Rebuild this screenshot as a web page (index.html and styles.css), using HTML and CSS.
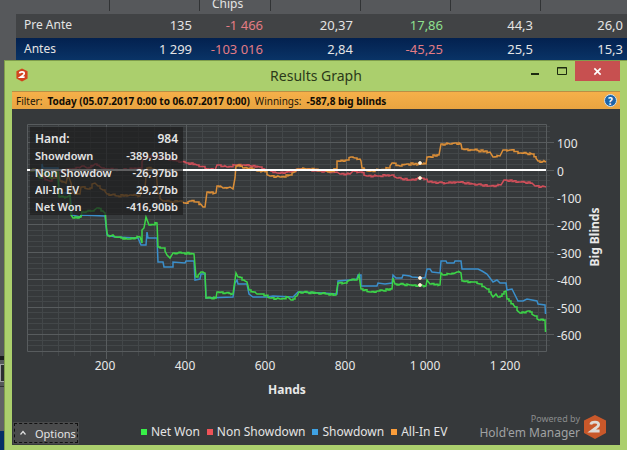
FILE: index.html
```html
<!DOCTYPE html>
<html lang="en">
<head>
    <meta charset="UTF-8">
    <meta name="viewport" content="width=device-width, initial-scale=1.0">
    <title>Results Graph</title>
    <link rel="stylesheet" href="styles.css">
</head>
<body>

    <main class="report">
        <table class="stats">
            <colgroup>
                <col class="col-name">
                <col class="col-wide">
                <col class="col-chips">
                <col class="col-wide">
                <col class="col-wide">
                <col class="col-wide">
                <col class="col-wide">
            </colgroup>
            <thead>
                <tr><th></th><th></th><th>Chips</th><th></th><th></th><th></th><th></th></tr>
            </thead>
            <tbody>
                <tr><td>Pre Ante</td><td>135</td><td class="loss">-1 466</td><td>20,37</td><td class="gain">17,86</td><td>44,3</td><td>26,0</td></tr>
                <tr class="selected"><td>Antes</td><td>1 299</td><td class="loss">-103 016</td><td>2,84</td><td class="loss">-45,25</td><td>25,5</td><td>15,3</td></tr>
            </tbody>
        </table>
        <div class="lower">
            <div class="lower-bar"></div>
            <div class="lower-field"></div>
            <div class="lower-gap"></div>
            <div class="lower-row"></div>
        </div>
    </main>

    <section class="window">
        <header class="titlebar">
            <svg class="app-icon" viewBox="0 0 14 16">
                <path d="M7 0.5 L13.5 3.5 V12 L7 15.5 L0.5 12 V3.5 Z" fill="#d2431d"/>
                <path d="M4.2 6 Q4.4 4.4 7 4.4 Q9.6 4.4 9.6 6.3 Q9.6 7.6 7.6 8.7 L5 10.6 H10" fill="none" stroke="#fff" stroke-width="2"/>
            </svg>
            <h1>Results Graph</h1>
            <div class="controls">
                <button type="button" class="minimize" aria-label="Minimize"><svg viewBox="0 0 10 10"><path d="M1 8 H9" stroke="#1c2a10" stroke-width="2"/></svg></button>
                <button type="button" class="maximize" aria-label="Maximize"><svg viewBox="0 0 10 10"><path d="M0.5 1.5 H9.5 V8.5 H0.5 Z M0 2 H10" fill="none" stroke="#1c2a10" stroke-width="1"/></svg></button>
                <button type="button" class="close" aria-label="Close"><svg viewBox="0 0 10 10"><path d="M1.5 1.5 L8.5 8.5 M8.5 1.5 L1.5 8.5" stroke="#fff" stroke-width="1.8"/></svg></button>
            </div>
        </header>

        <div class="client">
            <div class="filter">
                <span>Filter:</span>
                <strong>Today (05.07.2017 0:00 to 06.07.2017 0:00)</strong>
                <span>Winnings:</span>
                <strong>-587,8 big blinds</strong>
                <button type="button" class="help" aria-label="Help">?</button>
            </div>

            <div class="chart">
                <svg class="plot" viewBox="12 109 608 291">
                    <g id="grid"></g>
                    <g id="series"></g>
                    <path class="zero" d="M27 170 H546"/>
                    <g class="markers">
                        <circle cx="420" cy="163" r="1.5"/>
                        <circle cx="420" cy="178" r="1.5"/>
                        <circle cx="420" cy="278" r="1.5"/>
                        <circle cx="420" cy="285" r="1.5"/>
                    </g>
                    <g id="labels"></g>
                    <text class="axis-title" x="287" y="394">Hands</text>
                    <text class="axis-title" transform="translate(599 237) rotate(-90)">Big Blinds</text>
                </svg>
                <dl class="tip">
                    <dt class="tip-hand">Hand:</dt><dd class="tip-hand">984</dd>
                    <dt>Showdown</dt><dd>-389,93bb</dd>
                    <dt>Non Showdown</dt><dd>-26,97bb</dd>
                    <dt>All-In EV</dt><dd>29,27bb</dd>
                    <dt>Net Won</dt><dd>-416,90bb</dd>
                </dl>
            </div>

            <footer class="footer">
                <button type="button" class="options">
                    <svg viewBox="0 0 8 6"><path d="M1.5 4.5 L4 1.5 L6.5 4.5" fill="none" stroke="#e0e0e0" stroke-width="1.2"/></svg>
                    <span>Options</span>
                </button>
                <ul class="legend">
                    <li class="net">Net Won</li>
                    <li class="non">Non Showdown</li>
                    <li class="show">Showdown</li>
                    <li class="ev">All-In EV</li>
                </ul>
                <div class="brand">
                    <p><small>Powered by</small>Hold'em Manager</p>
                    <svg viewBox="0 0 22 24">
                        <path d="M11 0 L22 5.5 V18 L11 24 L0 18 V5.5 Z" fill="#c9582a"/>
                        <path d="M6.8 9.4 Q7.2 7.2 11 7.2 Q14.6 7.2 14.6 9.6 Q14.6 11.4 11.8 12.9 L7.6 16 H15.6" fill="none" stroke="#dedad6" stroke-width="2.8"/>
                    </svg>
                </div>
            </footer>
        </div>
    </section>

    <script src="chart.js"></script>
</body>
</html>
```

FILE: styles.css
```css
* {
    box-sizing: border-box;
}

body {
    margin: 0;
    height: 100vh;
    overflow: hidden;
    background-color: #56585b;
    font-family: "Noto Sans", sans-serif;
    font-size: 12px;
    color: #e4e4e4;
}

button {
    padding: 0;
    border: none;
    background: none;
    font: inherit;
    color: inherit;
}

.report {
    display: flex;
    flex-direction: column;
    height: 100vh;
    overflow: hidden;
}

.stats {
    flex: none;
    width: 615px;
    margin-left: 16px;
    table-layout: fixed;
    border-collapse: collapse;
    font-size: 13px;
}

.col-name {
    width: 94px;
}

.col-wide {
    width: 90px;
}

.col-chips {
    width: 71px;
}

.stats th {
    height: 14px;
    padding: 0 0 0 12px;
    font-size: 12px;
    font-weight: normal;
    line-height: 8px;
    text-align: left;
    vertical-align: top;
    background: linear-gradient(#313335, #313335) no-repeat right top / 1px 11px;
}

.stats th:last-child {
    background: none;
}

.stats td {
    height: 24px;
    padding: 0 8px;
    line-height: 22px;
    text-align: right;
    vertical-align: top;
    background-color: #414345;
}

.stats td:first-child {
    font-size: 12px;
    text-align: left;
}

.stats .selected td {
    background: linear-gradient(#03214f, #0a3568);
}

.stats .loss {
    color: #e37c84;
}

.stats .gain {
    color: #8fe08f;
}

.lower {
    display: flex;
    flex-direction: column;
    flex: 1;
    justify-content: flex-end;
}

.lower-bar {
    height: 4px;
    background-color: #1b1c1d;
}

.lower-field {
    height: 18px;
    margin: 4px 0 4px;
    border: 1px solid #a0a2a4;
    background-color: #2c2e30;
}

.lower-gap {
    height: 45px;
    border-top: 1px solid #303234;
    background-color: #606265;
}

.lower-row {
    height: 19px;
    background-color: #062f66;
}

/* dialog over the report */
.window {
    position: absolute;
    inset: 60px 0 0 4px;
    display: flex;
    flex-direction: column;
    padding: 0 7px 5px 7px;
    border-top: 1px solid #7f9d4c;
    border-left: 1px solid #7f9d4c;
    background-color: #abcf6d;
}

.titlebar {
    display: grid;
    grid-template-columns: 99px 1fr 99px;
    height: 30px;
    flex: none;
}

.app-icon {
    width: 12px;
    height: 14px;
    margin: 7px 4px;
}

.titlebar h1 {
    margin: 0;
    font-size: 14px;
    font-weight: normal;
    line-height: 30px;
    text-align: center;
    color: #2b3a1a;
}

.controls {
    display: flex;
    justify-content: flex-end;
    height: 20px;
}

.controls button {
    display: flex;
    align-items: center;
    justify-content: center;
    width: 27px;
}

.controls svg {
    width: 10px;
    height: 10px;
}

.controls .close {
    width: 45px;
    background-color: #c75050;
}

.controls .close svg {
    width: 9px;
    height: 9px;
}

.client {
    display: flex;
    flex-direction: column;
    flex: 1;
    min-height: 0;
    background-color: #36393b;
}

.filter {
    display: flex;
    align-items: center;
    gap: 5px;
    height: 18px;
    padding: 0 3px 0 4px;
    border-top: 1px solid #b98f45;
    background: linear-gradient(#f5b04a, #e9a440);
    font-size: 10px;
    line-height: 16px;
    white-space: nowrap;
    color: #1c1608;
}

.filter strong {
    color: #100c04;
}

.help {
    width: 13px;
    height: 13px;
    margin-left: auto;
    border: 1px solid #d5dfe8;
    border-radius: 50%;
    background-color: #1d64a8;
    font-size: 10px;
    font-weight: bold;
    line-height: 10px;
    color: #fff;
}

.chart {
    position: relative;
    flex: 1;
    min-height: 0;
}

.plot {
    display: block;
    width: 100%;
    height: 100%;
    font-size: 12px;
    fill: #e8e8e8;
}

.minor {
    stroke: #434749;
}

.major {
    stroke: #585c5e;
}

.zero {
    stroke: #fff;
    stroke-width: 2;
}

.line {
    fill: none;
    stroke-width: 1.5;
}

.line-net {
    stroke: #3cd548;
}

.line-show {
    stroke: #3b8fcb;
}

.line-non {
    stroke: #d04f5a;
}

.line-ev {
    stroke: #dc8f38;
}

.markers circle {
    fill: #fff;
    stroke: #f3dcb8;
}

.label-x,
.axis-title {
    text-anchor: middle;
}

.axis-title {
    font-weight: bold;
}

.tip {
    position: absolute;
    top: 18px;
    left: 18px;
    display: grid;
    grid-template-columns: 77px 1fr;
    width: 153px;
    margin: 0;
    padding: 3px 5px 0;
    background-color: rgba(28, 29, 30, 0.7);
    font-size: 11px;
    font-weight: 600;
    line-height: 17px;
}

.tip dt {
    overflow: hidden;
    white-space: nowrap;
}

.tip dd {
    margin: 0;
    text-align: right;
}

.tip .tip-hand {
    font-size: 12px;
}

.footer {
    display: flex;
    align-items: flex-end;
    height: 45px;
    flex: none;
}

.options {
    display: flex;
    align-items: center;
    gap: 8px;
    height: 22px;
    margin: 0 0 1px 1px;
    padding: 0 3px 0 6px;
    outline: 1px dashed #111;
    outline-offset: -2px;
    background-color: #4a4b4c;
    font-size: 11px;
}

.options svg {
    width: 8px;
    height: 6px;
}

.legend {
    display: flex;
    gap: 7px;
    margin: 0 32px 0 auto;
    padding: 0 0 3px;
    list-style: none;
    line-height: 20px;
    white-space: nowrap;
}

.legend li {
    display: flex;
    align-items: center;
    gap: 4px;
}

.legend li::before {
    content: "";
    width: 6px;
    height: 6px;
    background-color: currentColor;
}

.legend .net::before {
    background-color: #38f048;
}

.legend .non::before {
    background-color: #ee5358;
}

.legend .show::before {
    background-color: #3fa2e4;
}

.legend .ev::before {
    background-color: #fb9d3a;
}

.brand {
    display: flex;
    align-items: center;
    gap: 4px;
    padding: 0 14px 4px 0;
    color: #a0a2a3;
    white-space: nowrap;
}

.brand p {
    display: flex;
    flex-direction: column;
    margin: 0;
    line-height: 16px;
    text-align: right;
}

.brand small {
    font-size: 9px;
    line-height: 12px;
    color: #8a8c8d;
}

.brand svg {
    width: 22px;
    height: 24px;
}
```

FILE: chart.js
```js
var LEFT = 27, RIGHT = 546, TOP = 124, BOTTOM = 351;

function xOf(hand) { return Math.round(26.5 + hand * 0.4); }
function yOf(bb) { return Math.round(170.5 - bb * 0.2745); }

function add(parent, tag, attrs, text) {
    var el = document.createElementNS("http://www.w3.org/2000/svg", tag);
    for (var key in attrs) el.setAttribute(key, attrs[key]);
    if (text) el.textContent = text;
    document.getElementById(parent).appendChild(el);
}

function gridLine(d, cls) {
    add("grid", "path", { d: d, "class": cls });
}

// minor lines first so the major ones stay on top
[false, true].forEach(function (major) {
    for (var h = 40; h < 1300; h += 40) {
        if ((h % 200 === 0) === major) {
            gridLine("M" + (xOf(h) - 0.5) + " " + TOP + " V" + (BOTTOM + (major ? 8 : 5)), major ? "major" : "minor");
        }
    }
    for (var v = 160; v >= -640; v -= 20) {
        if ((v % 100 === 0) === major) {
            gridLine("M" + LEFT + " " + (yOf(v) - 0.5) + " H" + (RIGHT + (major ? 8 : 4)), major ? "major" : "minor");
        }
    }
});
gridLine("M27.5 124.5 H546.5 V351.5 H27.5 Z", "major");
document.getElementById("grid").setAttribute("fill", "none");

for (var h = 200; h <= 1200; h += 200) {
    add("labels", "text", { x: xOf(h) - 2, y: 370, "class": "label-x" }, h < 1000 ? String(h) : "1 " + String(h).slice(1));
}
for (var v = 100; v >= -600; v -= 100) {
    add("labels", "text", { x: 557, y: yOf(v) + 5 }, String(v));
}

// noise adds the hand-to-hand ripple between two points
function drawSeries(cls, noise, points) {
    var ripple = [0, 1, -1, 0.5, -0.5, 1, 0, -1];
    var d = "M" + points[0][0] + " " + points[0][1];
    var n = 0;
    for (var i = 1; i < points.length; i++) {
        var a = points[i - 1], b = points[i];
        var steps = noise ? Math.floor((b[0] - a[0]) / 2) : 0;
        for (var s = 1; s < steps; s++) {
            var y = a[1] + (b[1] - a[1]) * s / steps + ripple[n++ % 8] * noise;
            d += " H" + (a[0] + s * 2) + " V" + y.toFixed(1);
        }
        d += " L" + b[0] + " " + b[1];
    }
    add("series", "path", { d: d, "class": "line " + cls });
}

drawSeries("line-non", 0.8, [[27,170],[38,170],[41,177],[50,181],[56,175],[60,172],[68,169],[74,169],[82,166],[87,168],[95,164],[102,168],[107,169],[120,170],[140,168],[145,157],[153,156],[163,158],[177,161],[187,163],[197,165],[207,169],[215,170],[217,165],[227,167],[235,165],[243,165],[260,167],[267,170],[277,173],[290,172],[300,169],[320,171],[337,172],[340,174],[350,174],[353,171],[360,172],[367,176],[377,176],[392,175],[397,178],[410,180],[420,178],[427,179],[428,182],[447,183],[457,182],[473,184],[490,186],[501,185],[504,180],[520,182],[532,183],[535,186],[546,187]]);

drawSeries("line-ev", 0.9, [[27,170],[38,170],[44,176],[55,178],[59,174],[60,181],[66,183],[68,175],[71,183],[73,193],[80,194],[81,187],[88,189],[95,183],[98,186],[103,190],[107,194],[117,196],[130,195],[140,196],[142,190],[145,187],[147,168],[156,170],[158,194],[163,201],[173,202],[180,201],[184,203],[190,201],[197,202],[203,207],[205,207],[207,192],[216,193],[217,186],[223,188],[230,187],[233,189],[235,178],[236,166],[242,166],[243,168],[250,168],[257,171],[263,171],[270,176],[280,177],[290,175],[295,172],[297,169],[306,169],[323,170],[328,172],[337,169],[337,161],[347,160],[351,157],[355,158],[360,159],[361,161],[362,168],[367,171],[380,170],[388,168],[392,163],[400,166],[407,164],[420,164],[426,164],[427,157],[439,155],[441,144],[450,144],[455,143],[461,144],[462,149],[473,150],[490,152],[493,157],[500,156],[503,150],[510,150],[520,153],[532,154],[538,161],[546,162]]);

drawSeries("line-show", 0, [[35,170],[42,170],[42,164],[43,168],[58,168],[59,193],[70,193],[72,215],[80,217],[81,215],[105,216],[107,235],[115,237],[138,238],[141,245],[146,245],[147,232],[148,238],[157,238],[158,262],[163,262],[164,267],[173,267],[173,262],[185,263],[186,261],[194,261],[195,280],[200,279],[201,274],[205,274],[206,298],[233,297],[235,283],[237,280],[238,284],[247,284],[249,294],[253,297],[267,297],[273,296],[293,297],[298,292],[323,293],[337,294],[338,281],[350,280],[357,279],[358,275],[361,275],[361,286],[377,286],[378,283],[385,284],[392,283],[393,275],[396,278],[402,278],[403,275],[410,276],[412,277],[425,278],[427,269],[430,269],[432,272],[440,273],[441,261],[446,261],[447,263],[454,263],[455,261],[461,261],[462,269],[478,269],[482,271],[487,274],[493,282],[497,280],[500,283],[506,283],[507,290],[512,289],[518,301],[523,301],[527,299],[537,301],[538,304],[545,305],[545.5,314]]);

drawSeries("line-net", 0.8, [[27,170],[35,170],[37,175],[40,178],[45,172],[50,178],[54,173],[58,172],[59,197],[67,197],[70,195],[71,215],[73,218],[81,217],[82,212],[92,211],[97,208],[105,213],[107,233],[108,236],[113,235],[115,237],[127,239],[140,237],[142,243],[142,230],[144,228],[146,217],[149,225],[157,223],[158,247],[163,248],[167,255],[170,258],[173,253],[183,253],[194,254],[196,277],[201,272],[205,273],[206,298],[216,298],[217,292],[233,294],[236,273],[238,277],[247,282],[249,290],[257,294],[262,294],[270,298],[280,299],[288,297],[291,300],[297,296],[299,292],[317,293],[327,294],[336,295],[338,283],[345,283],[350,280],[357,280],[359,275],[361,289],[370,292],[378,291],[392,289],[393,278],[395,284],[410,285],[426,286],[427,280],[430,284],[440,285],[441,273],[443,275],[450,274],[457,272],[461,273],[462,281],[473,282],[480,284],[487,289],[493,297],[496,294],[498,297],[506,291],[507,299],[515,307],[520,313],[528,311],[535,316],[539,320],[545,320],[545.5,332]]);
```
